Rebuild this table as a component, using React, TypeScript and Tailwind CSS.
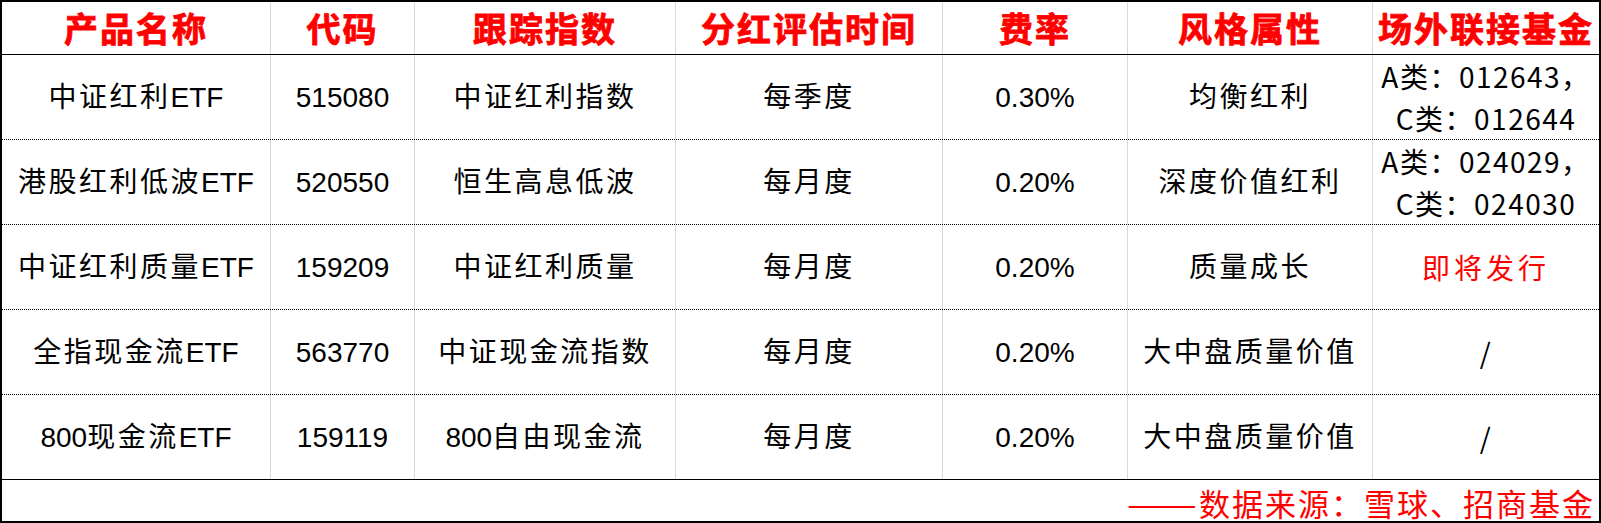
import React from 'react';

const headers = ['产品名称', '代码', '跟踪指数', '分红评估时间', '费率', '风格属性', '场外联接基金'];
const widths = ['w-[269px]', 'w-[144px]', 'w-[261px]', 'w-[267px]', 'w-[185px]', 'w-[245px]', 'flex-1'];

type Row = {
  name: string;
  code: string;
  index: string;
  freq: string;
  fee: string;
  style: string;
  link: string[] | null;
  upcoming?: boolean;
};

const rows: Row[] = [
  { name: '中证红利ETF', code: '515080', index: '中证红利指数', freq: '每季度', fee: '0.30%', style: '均衡红利', link: ['A类：012643，', 'C类：012644'] },
  { name: '港股红利低波ETF', code: '520550', index: '恒生高息低波', freq: '每月度', fee: '0.20%', style: '深度价值红利', link: ['A类：024029，', 'C类：024030'] },
  { name: '中证红利质量ETF', code: '159209', index: '中证红利质量', freq: '每月度', fee: '0.20%', style: '质量成长', link: null, upcoming: true },
  { name: '全指现金流ETF', code: '563770', index: '中证现金流指数', freq: '每月度', fee: '0.20%', style: '大中盘质量价值', link: ['/'] },
  { name: '800现金流ETF', code: '159119', index: '800自由现金流', freq: '每月度', fee: '0.20%', style: '大中盘质量价值', link: ['/'] },
];

// CJK runs get a little extra tracking, latin/digits stay tight
function Mixed({ text }: { text: string }) {
  const parts = text.match(/[\u3000-\u9fff\uff00-\uffef]+|[^\u3000-\u9fff\uff00-\uffef]+/g) ?? [];
  return (
    <>
      {parts.map((p, i) =>
        /[\u3000-\u9fff\uff00-\uffef]/.test(p) ? (
          <span key={i} className="tracking-[2.5px]">{p}</span>
        ) : (
          <span key={i}>{p}</span>
        )
      )}
    </>
  );
}

const bodyFont = { fontFamily: '"Liberation Sans", "Noto Sans CJK SC", sans-serif' };
const cjkFont = { fontFamily: '"Noto Sans CJK SC", sans-serif' };

export default function App() {
  return (
    <div className="w-[1601px] h-[523px] bg-white">
      <div className="w-full h-full border-2 border-black flex flex-col box-border">
        {/* Header */}
        <div className="flex h-[53px] border-b border-black" style={cjkFont}>
          {headers.map((h, i) => (
            <div
              key={h}
              className={`${widths[i]} ${i < 6 ? 'border-r border-[#dadada]' : ''} flex items-center justify-center text-[34px] font-bold text-[#ff0000] tracking-[2px] leading-none [-webkit-text-stroke:0.8px_#ff0000]`}
            >
              {h}
            </div>
          ))}
        </div>

        {/* Body rows */}
        {rows.map((r, ri) => {
          const cells = [r.name, r.code, r.index, r.freq, r.fee, r.style];
          return (
            <div
              key={r.code}
              className={`flex h-[85px] border-b ${ri === rows.length - 1 ? 'border-solid border-black' : 'border-dotted border-black'}`}
              style={bodyFont}
            >
              {cells.map((c, i) => (
                <div
                  key={i}
                  className={`${widths[i]} border-r border-[#dadada] flex items-center justify-center text-[28px] text-black leading-none pt-[2px]`}
                >
                  <Mixed text={c} />
                </div>
              ))}
              <div className="flex-1 flex flex-col items-center justify-center text-[28px] leading-[42px]" style={cjkFont}>
                {r.upcoming ? (
                  <span className="text-[#ff0000] tracking-[4px]">即将发行</span>
                ) : (
                  r.link?.map((l) => (
                    <span key={l} className="text-black tracking-[1.5px] whitespace-pre">{l}</span>
                  ))
                )}
              </div>
            </div>
          );
        })}

        {/* Footer */}
        <div className="flex-1 flex items-center justify-end pr-[4px] pt-[4px]" style={cjkFont}>
          <span className="text-[31px] text-[#ff0000] tracking-[2px] leading-none">
            <span className="inline-block scale-x-[1.35] origin-right mr-[2px] tracking-normal">——</span>
            数据来源：雪球、招商基金
          </span>
        </div>
      </div>
    </div>
  );
}
